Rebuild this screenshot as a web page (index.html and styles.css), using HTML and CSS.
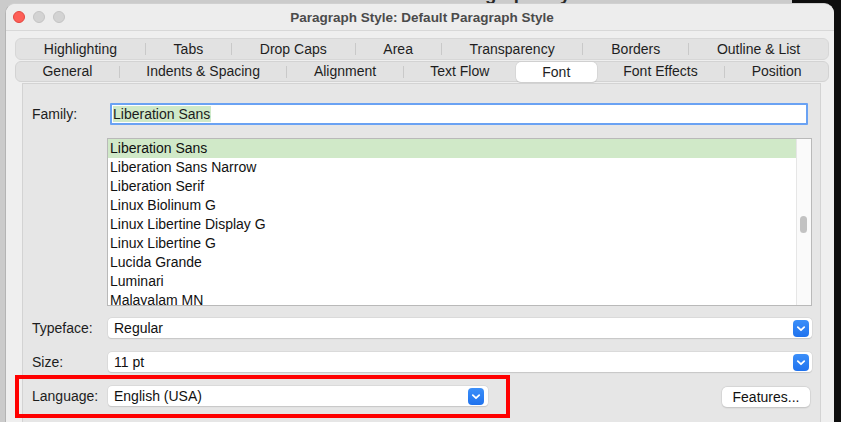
FILE: index.html
```html
<!DOCTYPE html>
<html>
<head>
<meta charset="utf-8">
<link rel="stylesheet" href="styles.css">
</head>
<body>
<div class="desk">
  <div class="peek"><div class="peek-text">Default Paragraph Style</div></div>
  <div class="window">
    <div class="titlebar">
      <div class="lights">
        <span class="light red"></span>
        <span class="light gray"></span>
        <span class="light gray"></span>
      </div>
      <div class="title">Paragraph Style: Default Paragraph Style</div>
      <div></div>
    </div>

    <div class="tabs">
      <div class="tabrow r1">
        <span class="tab">Highlighting</span><i class="sep"></i>
        <span class="tab">Tabs</span><i class="sep"></i>
        <span class="tab">Drop Caps</span><i class="sep"></i>
        <span class="tab">Area</span><i class="sep"></i>
        <span class="tab">Transparency</span><i class="sep"></i>
        <span class="tab">Borders</span><i class="sep"></i>
        <span class="tab">Outline &amp; List</span>
      </div>
      <div class="tabrow r2">
        <span class="tab">General</span><i class="sep"></i>
        <span class="tab">Indents &amp; Spacing</span><i class="sep"></i>
        <span class="tab">Alignment</span><i class="sep"></i>
        <span class="tab">Text Flow</span>
        <span class="tab active">Font</span>
        <span class="tab">Font Effects</span><i class="sep"></i>
        <span class="tab">Position</span>
      </div>
    </div>

    <div class="panel">
      <div class="row family-row">
        <span class="lbl">Family:</span>
        <div class="input"><span class="sel">Liberation Sans</span></div>
      </div>

      <div class="row list-row">
        <span class="lbl"></span>
        <div class="listbox">
          <div class="items">
            <div class="item selected">Liberation Sans</div>
            <div class="item">Liberation Sans Narrow</div>
            <div class="item">Liberation Serif</div>
            <div class="item">Linux Biolinum G</div>
            <div class="item">Linux Libertine Display G</div>
            <div class="item">Linux Libertine G</div>
            <div class="item">Lucida Grande</div>
            <div class="item">Luminari</div>
            <div class="item">Malayalam MN</div>
          </div>
          <div class="scrollbar"><div class="thumb"></div></div>
        </div>
      </div>

      <div class="row combo-row typeface-row">
        <span class="lbl">Typeface:</span>
        <div class="combo full">
          <span class="combo-text">Regular</span>
          <span class="combo-btn"><svg width="16" height="17" viewBox="0 0 16 17"><polyline points="4.8,7.2 8,10.2 11.2,7.2" fill="none" stroke="#fff" stroke-width="1.8" stroke-linecap="round" stroke-linejoin="round"/></svg></span>
        </div>
      </div>

      <div class="row combo-row">
        <span class="lbl">Size:</span>
        <div class="combo full">
          <span class="combo-text">11 pt</span>
          <span class="combo-btn"><svg width="16" height="17" viewBox="0 0 16 17"><polyline points="4.8,7.2 8,10.2 11.2,7.2" fill="none" stroke="#fff" stroke-width="1.8" stroke-linecap="round" stroke-linejoin="round"/></svg></span>
        </div>
      </div>

      <div class="row combo-row lang-row">
        <span class="lbl">Language:</span>
        <div class="combo lang">
          <span class="combo-text">English (USA)</span>
          <span class="combo-btn"><svg width="16" height="17" viewBox="0 0 16 17"><polyline points="4.8,7.2 8,10.2 11.2,7.2" fill="none" stroke="#fff" stroke-width="1.8" stroke-linecap="round" stroke-linejoin="round"/></svg></span>
        </div>
        <button class="btn">Features...</button>
        <div class="highlight-box"></div>
      </div>
    </div>
  </div>
</div>
</body>
</html>
```

FILE: styles.css
```css
* { box-sizing: border-box; }

html, body {
  margin: 0;
  padding: 0;
}

body {
  width: 841px;
  height: 422px;
  overflow: hidden;
  font-family: "Liberation Sans", Arial, sans-serif;
  font-size: 14px;
  color: #1c1c1c;
}

.desk {
  width: 841px;
  height: 422px;
  background: linear-gradient(to right, #cbcbcb 0, #cbcbcb 792px, #0e0e0e 792px);
  display: flex;
  flex-direction: column;
}

.peek {
  height: 3px;
  overflow: hidden;
  padding-left: 377px;
  flex: none;
}

.peek-text {
  font-weight: bold;
  font-size: 18.5px;
  line-height: 19px;
  margin-top: -16px;
  color: #2a2a2a;
  white-space: nowrap;
}

.window {
  margin-left: 5px;
  width: 829px;
  flex: 1;
  background: #efefef;
  border-radius: 10px 10px 0 0;
  border-left: 1px solid #b4b4b4;
  border-top: 1px solid #d0d0d0;
  overflow: hidden;
  display: flex;
  flex-direction: column;
}

.titlebar {
  height: 27px;
  flex: none;
  border-bottom: 1px solid #d8d8d8;
  background: #ededed;
  display: grid;
  grid-template-columns: 1fr auto 1fr;
  align-items: center;
}

.lights {
  display: flex;
  gap: 8px;
  padding-left: 7px;
}

.light {
  width: 12px;
  height: 12px;
  border-radius: 50%;
  display: block;
}

.light.red {
  background: #fe5f57;
  border: 0.5px solid #e2463f;
}

.light.gray {
  background: #d3d3d3;
  border: 0.5px solid #c4c4c4;
}

.title {
  font-weight: bold;
  font-size: 13.5px;
  color: #4b4b4b;
  padding-left: 4px;
}

.tabs {
  margin-top: 7px;
  margin-left: 9px;
  width: 814px;
  flex: none;
}

.tabrow {
  display: flex;
  align-items: center;
  background: #e2e2e2;
  border: 1px solid #d7d7d7;
  border-radius: 6px;
}

.tabrow.r1 {
  height: 22px;
}

.tabrow.r2 {
  height: 21px;
  margin-top: 1px;
  border-color: #d3d3d3;
}

.tab {
  flex: 1 1 auto;
  text-align: center;
  line-height: 19px;
  white-space: nowrap;
  color: #1e1e1e;
}

.tab.active {
  background: #fff;
  border-radius: 5px;
  height: 20px;
  line-height: 20px;
  box-shadow: 0 0 0 0.5px #cfcfcf, 0 0.5px 1px rgba(0,0,0,0.15);
}

.sep {
  flex: none;
  width: 1px;
  height: 12px;
  background: #c9c9c9;
}

.panel {
  margin-top: 1px;
  margin-left: 16px;
  width: 799px;
  flex: 1;
  background: #e6e6e6;
  border: 1px solid #d3d3d3;
  border-bottom: none;
  padding: 0 8px 0 9px;
}

.row {
  display: flex;
  align-items: center;
}

.lbl {
  flex: none;
  width: 76px;
  color: #1d1d1d;
}

.family-row {
  margin-top: 19px;
  height: 22px;
}

.input {
  margin-left: 2px;
  margin-right: 4px;
  flex: 1;
  height: 22px;
  background: #fff;
  border: 2px solid #6aa2f3;
  border-radius: 1px;
  padding-left: 1px;
  display: flex;
  align-items: center;
}

.sel {
  background: #d0e9c8;
  line-height: 16px;
  padding-right: 1px;
}

.list-row {
  margin-top: 13px;
  align-items: stretch;
}

.listbox {
  margin-left: -1px;
  flex: 1;
  height: 168px;
  background: #fff;
  border: 1px solid #b9b9b9;
  display: flex;
  overflow: hidden;
}

.items {
  flex: 1;
  overflow: hidden;
}

.item {
  height: 19px;
  line-height: 19px;
  padding-left: 2px;
  white-space: nowrap;
  color: #111;
}

.item.selected {
  background: #d0e9c8;
}

.scrollbar {
  flex: none;
  width: 15px;
  background: #fafafa;
  border-left: 1px solid #e6e6e6;
  padding-top: 77px;
}

.thumb {
  margin-left: 3px;
  width: 7px;
  height: 17px;
  border-radius: 4px;
  background: #c2c2c2;
}

.combo-row {
  height: 20px;
  margin-top: 14px;
}

.typeface-row {
  margin-top: 12px;
}

.combo {
  height: 20px;
  background: #fff;
  border-radius: 4px;
  box-shadow: 0 0 0 0.5px #d2d2d2, 0 0.5px 1px rgba(0,0,0,0.18);
  display: flex;
  align-items: center;
  padding-left: 6px;
  padding-right: 3px;
}

.combo.full {
  flex: 1;
}

.combo.lang {
  width: 380px;
  flex: none;
  padding-right: 4px;
}

.combo-text {
  flex: 1;
  color: #111;
  white-space: nowrap;
}

.combo-btn {
  flex: none;
  width: 16px;
  height: 17px;
  border-radius: 4px;
  background: linear-gradient(#3b8ff9, #1f72ee);
  display: block;
}

.combo-btn svg {
  display: block;
}

.lang-row {
  position: relative;
}

.btn {
  margin-left: auto;
  margin-right: 2px;
  margin-top: 2px;
  width: 88px;
  height: 20px;
  padding: 0;
  border: none;
  border-radius: 5px;
  background: #fff;
  box-shadow: 0 0 0 0.5px #d0d0d0, 0 0.5px 1.5px rgba(0,0,0,0.2);
  font-family: "Liberation Sans", Arial, sans-serif;
  font-size: 14px;
  color: #111;
}

.highlight-box {
  position: absolute;
  left: -17px;
  top: -11px;
  width: 495px;
  height: 43px;
  border: 4px solid #ff0000;
  pointer-events: none;
}
```
